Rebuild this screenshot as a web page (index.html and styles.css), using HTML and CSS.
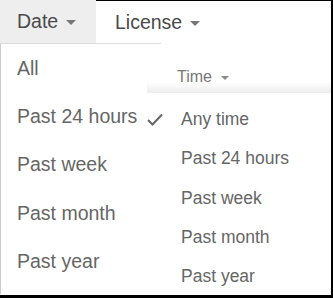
FILE: index.html
```html
<!DOCTYPE html>
<html>
<head>
<meta charset="utf-8">
<link rel="stylesheet" href="styles.css">
</head>
<body>
<div class="frame">
  <div class="tabs">
    <div class="tab tab-active">Date <span class="caret"></span></div>
    <div class="tab">License <span class="caret"></span></div>
  </div>
  <ul class="date-menu">
    <li>All</li>
    <li>Past 24 hours</li>
    <li>Past week</li>
    <li>Past month</li>
    <li>Past year</li>
  </ul>
  <div class="time-panel">
    <div class="time-head">Time <span class="caret caret-small"></span></div>
    <ul class="time-menu">
      <li><span class="check"><svg width="16" height="13" viewBox="0 0 16 13"><polyline points="1,7 5.5,11.5 15,1.5" fill="none" stroke="#666" stroke-width="2"/></svg></span>Any time</li>
      <li><span class="check"></span>Past 24 hours</li>
      <li><span class="check"></span>Past week</li>
      <li><span class="check"></span>Past month</li>
      <li><span class="check"></span>Past year</li>
    </ul>
  </div>
</div>
</body>
</html>
```

FILE: styles.css
```css
html, body {
  margin: 0;
  padding: 0;
  background: #fff;
}
body {
  font-family: "Liberation Sans", Arial, sans-serif;
}
.frame {
  box-sizing: border-box;
  width: 333px;
  height: 298px;
  border-right: 2px solid #000;
  border-bottom: 3px solid #000;
  position: relative;
  overflow: hidden;
}
.tabs {
  display: flex;
  height: 42px;
  border-top: 1px solid #000;
}
.tab {
  display: flex;
  align-items: center;
  height: 42px;
  padding: 0 18px 0 19px;
  font-size: 19.5px;
  color: #4a4a4a;
}
.tab-active {
  margin-top: -1px;
  height: 43px;
  width: 96px;
  box-sizing: border-box;
  padding-left: 17px;
  background: #eeeeee;
}
.caret {
  display: inline-block;
  width: 0;
  height: 0;
  margin-left: 8px;
  margin-top: 2px;
  border-left: 5px solid transparent;
  border-right: 5px solid transparent;
  border-top: 5px solid #777;
}
.caret-small {
  border-left-width: 4.5px;
  border-right-width: 4.5px;
  border-top-width: 4.5px;
  border-top-color: #888;
  margin-left: 9px;
}
.date-menu {
  list-style: none;
  margin: 0;
  padding: 0;
  width: 161px;
  height: 251px;
  box-sizing: border-box;
  border-left: 1px solid #cccccc;
  border-top: 1px solid #dcdcdc;
}
.date-menu li {
  height: 48.3px;
  display: flex;
  align-items: center;
  padding-left: 16px;
  font-size: 19.5px;
  color: #666;
  white-space: nowrap;
}
.time-panel {
  position: absolute;
  left: 147px;
  top: 58px;
  right: 0;
  bottom: 0;
  background: #fff;
}
.time-head {
  height: 35px;
  display: flex;
  align-items: center;
  padding-left: 30px;
  padding-top: 2px;
  box-sizing: border-box;
  font-size: 16px;
  color: #777;
  background: linear-gradient(to bottom, #fff 0, #fff 24px, #ececec 35px);
}
.time-menu {
  list-style: none;
  margin: 0;
  padding: 7px 0 0 0;
}
.time-menu li {
  height: 39.3px;
  display: flex;
  align-items: center;
  font-size: 17.5px;
  color: #666;
  white-space: nowrap;
}
.check {
  width: 34px;
  display: flex;
  align-items: center;
}
.check svg {
  display: block;
}
```
